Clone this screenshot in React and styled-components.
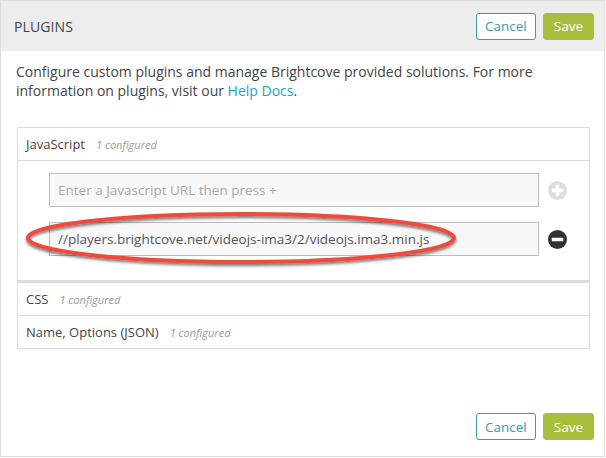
import React from "react";
import styled, { createGlobalStyle } from "styled-components";

const GlobalStyle = createGlobalStyle`
  body {
    margin: 0;
    background: #fff;
    font-family: "Open Sans", "Liberation Sans", sans-serif;
    color: #444;
  }
`;

const Frame = styled.div`
  position: relative;
  width: 605px;
  height: 457px;
  box-sizing: border-box;
  border: 1px solid #dcdcdc;
  display: flex;
  flex-direction: column;
`;

const Header = styled.div`
  height: 50px;
  background: #ededed;
  display: flex;
  align-items: center;
  justify-content: space-between;
  padding: 0 10px 0 13px;
`;

const Title = styled.h1`
  margin: 0;
  font-size: 14px;
  font-weight: 400;
  color: #444;
  letter-spacing: 0.1px;
`;

const Buttons = styled.div`
  display: flex;
  gap: 7px;
`;

const Button = styled.button`
  height: 27px;
  padding: 0 ${(p) => (p.$primary ? "10px" : "8px")};
  border-radius: 3px;
  font-family: inherit;
  font-size: 13.5px;
  cursor: pointer;
  border: 1px solid ${(p) => (p.$primary ? "#a6c03d" : "#3d9aa8")};
  background: ${(p) => (p.$primary ? "#a6c03d" : "#fff")};
  color: ${(p) => (p.$primary ? "#fff" : "#3d9aa8")};
`;

const Body = styled.div`
  flex: 1;
  padding: 11px 14px 0 15px;
`;

const Intro = styled.p`
  margin: 0;
  font-size: 14px;
  line-height: 19px;
  color: #444;
`;

const Line = styled.span`
  display: block;
  white-space: nowrap;
`;

const Link = styled.a`
  color: #1aa6c0;
  text-decoration: none;
`;

const Panel = styled.div`
  margin-top: 27px;
  margin-left: 1px;
  border: 1px solid #dcdcdc;
`;

const Row = styled.div`
  height: 32px;
  display: flex;
  align-items: center;
  gap: 11px;
  padding: 0 8px;
  font-size: 13px;
  color: #444;
  border-top: ${(p) => (p.$first ? "none" : "1px solid #dcdcdc")};
`;

const Count = styled.span`
  font-size: 11px;
  font-style: italic;
  color: #9a9a9a;
`;

const Section = styled.div`
  border-top: 1px solid #dcdcdc;
  border-bottom: 3px solid #dcdcdc;
  padding: 12px 0 24px 31px;
  display: flex;
  flex-direction: column;
  gap: 15px;
`;

const Entry = styled.div`
  display: flex;
  align-items: center;
  gap: 9px;
`;

const Input = styled.div`
  width: 490px;
  height: 34px;
  box-sizing: border-box;
  border: 1px solid #bdbdbd;
  background: #f8f8f8;
  display: flex;
  align-items: center;
  padding: 0 8px;
  font-size: 13.5px;
  color: ${(p) => (p.$placeholder ? "#a8a8a8" : "#555")};
`;

const CircleIcon = ({ dark }) => (
  <svg width="19" height="19" viewBox="0 0 20 20">
    <circle cx="10" cy="10" r="10" fill={dark ? "#333" : "#dedede"} />
    <rect x="4" y="8.2" width="12" height="3.6" rx="0.6" fill="#fff" />
    {!dark && <rect x="8.2" y="4" width="3.6" height="12" rx="0.6" fill="#fff" />}
  </svg>
);

const Footer = styled.div`
  display: flex;
  justify-content: flex-end;
  padding: 0 10px 16px 0;
`;

const Annotation = styled.svg`
  position: absolute;
  left: 18px;
  top: 204px;
  pointer-events: none;
`;

export default function App() {
  return (
    <>
      <GlobalStyle />
      <Frame>
        <Header>
          <Title>PLUGINS</Title>
          <Buttons>
            <Button>Cancel</Button>
            <Button $primary>Save</Button>
          </Buttons>
        </Header>
        <Body>
          <Intro>
            <Line>Configure custom plugins and manage Brightcove provided solutions. For more</Line>
            <Line>
              information on plugins, visit our <Link href="#">Help Docs</Link>.
            </Line>
          </Intro>
          <Panel>
            <Row $first>
              JavaScript <Count>1 configured</Count>
            </Row>
            <Section>
              <Entry>
                <Input $placeholder>Enter a Javascript URL then press +</Input>
                <CircleIcon />
              </Entry>
              <Entry>
                <Input>//players.brightcove.net/videojs-ima3/2/videojs.ima3.min.js</Input>
                <CircleIcon dark />
              </Entry>
            </Section>
            <Row $first>
              CSS <Count>1 configured</Count>
            </Row>
            <Row>
              Name, Options (JSON) <Count>1 configured</Count>
            </Row>
          </Panel>
        </Body>
        <Footer>
          <Buttons>
            <Button>Cancel</Button>
            <Button $primary>Save</Button>
          </Buttons>
        </Footer>
        <Annotation width="450" height="66" viewBox="0 0 450 66">
          <defs>
            <filter id="sh" x="-10%" y="-30%" width="120%" height="160%">
              <feDropShadow dx="0" dy="2" stdDeviation="1.5" floodColor="#000" floodOpacity="0.55" />
            </filter>
          </defs>
          <ellipse cx="222" cy="33" rx="213" ry="24" fill="none" stroke="#f0483e" strokeWidth="4" filter="url(#sh)" />
        </Annotation>
      </Frame>
    </>
  );
}
